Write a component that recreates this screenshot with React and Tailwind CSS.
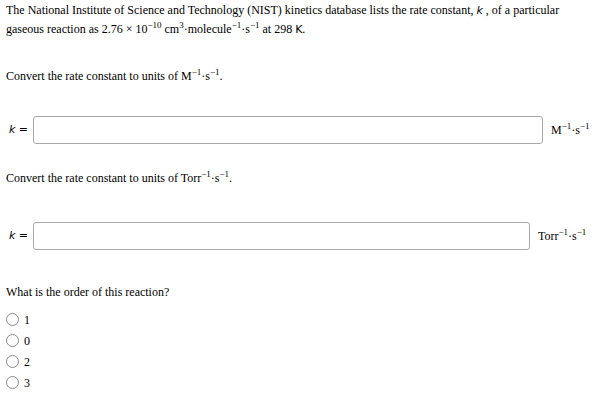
import React from "react";

const Sup = ({ children }) => (
  <sup className="text-[9px] -top-[5px]">{children}</sup>
);

function Radio({ label }) {
  return (
    <div className="flex items-center h-[21px]">
      <span className="w-[13px] h-[13px] rounded-full border border-[#8a8a8a] bg-white ml-[6px] mr-[5px]" />
      <span className="text-[12px]">{label}</span>
    </div>
  );
}

const sans = { fontFamily: '"DejaVu Sans", sans-serif' };

export default function App() {
  return (
    <div className="w-[599px] h-[412px] bg-white text-black overflow-hidden" style={{ fontFamily: '"Liberation Serif", serif' }}>
      <div className="px-[6px] pt-[1px] text-[12px] leading-[18px]">
        <p>
          The National Institute of Science and Technology (NIST) kinetics database lists the rate constant, <i className="text-[11px]" style={sans}>k</i> , of a particular
        </p>
        <p>
          gaseous reaction as 2.76 × 10<Sup>−10</Sup> cm<Sup>3</Sup>·molecule<Sup>−1</Sup>·s<Sup>−1</Sup> at 298 <span className="text-[11px]" style={sans}>K</span>.
        </p>
        <p className="mt-[28px]">
          Convert the rate constant to units of M<Sup>−1</Sup>·s<Sup>−1</Sup>.
        </p>
      </div>
      <div className="flex items-center mt-[31px] h-[28px]">
        <span className="w-[33px] pl-[9px] text-[11px]" style={sans}>
          <i>k</i> =
        </span>
        <div className="w-[510px] h-[28px] border border-[#a8a8a8] rounded-[3px]" />
        <span className="ml-[8px] text-[12px]">
          M<Sup>−1</Sup>·s<Sup>−1</Sup>
        </span>
      </div>
      <p className="px-[6px] mt-[25px] text-[12px] leading-[18px]">
        Convert the rate constant to units of Torr<Sup>−1</Sup>·s<Sup>−1</Sup>.
      </p>
      <div className="flex items-center mt-[35px] h-[28px]">
        <span className="w-[33px] pl-[9px] text-[11px]" style={sans}>
          <i>k</i> =
        </span>
        <div className="w-[497px] h-[28px] border border-[#a8a8a8] rounded-[3px]" />
        <span className="ml-[8px] text-[12px]">
          Torr<Sup>−1</Sup>·s<Sup>−1</Sup>
        </span>
      </div>
      <p className="px-[6px] mt-[33px] text-[12px] leading-[18px]">What is the order of this reaction?</p>
      <div className="mt-[8px]">
        <Radio label="1" />
        <Radio label="0" />
        <Radio label="2" />
        <Radio label="3" />
      </div>
    </div>
  );
}
